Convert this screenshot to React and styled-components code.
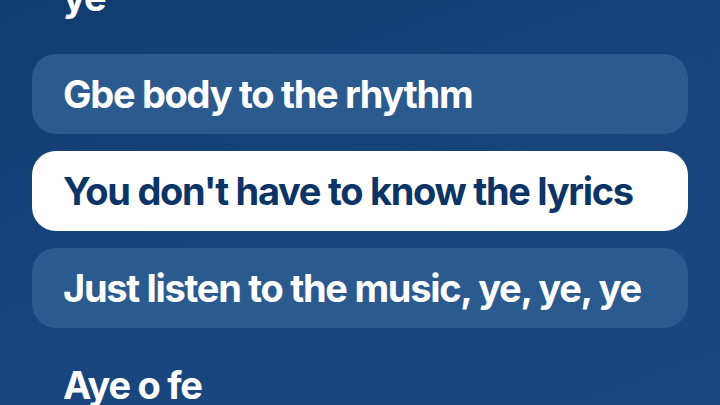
import React from "react";
import styled, { createGlobalStyle } from "styled-components";

const Global = createGlobalStyle`
  html, body {
    margin: 0;
    padding: 0;
    width: 720px;
    height: 405px;
    overflow: hidden;
  }
  body {
    background: linear-gradient(160deg, #113c71 0%, #17457c 55%, #1a4880 100%);
    font-family: Inter, "Noto Sans", sans-serif;
  }
`;

const Viewport = styled.main`
  width: 720px;
  height: 405px;
  overflow: hidden;
`;

/* Lyric list, scrolled so the active line sits near the middle */
const List = styled.ol`
  list-style: none;
  margin: 0;
  padding: 0 32px;
  display: flex;
  flex-direction: column;
  gap: 17px;
  transform: translateY(${(p) => p.$offset}px);
`;

const Line = styled.li`
  height: 80px;
  box-sizing: border-box;
  padding: 0 31px;
  display: flex;
  align-items: center;
  border-radius: 24px;
  background: ${(p) =>
    p.$state === "active" ? "#ffffff" : p.$state === "near" ? "#2b5a8e" : "transparent"};
  color: ${(p) => (p.$state === "active" ? "#0b3567" : "#ffffff")};
  font-size: 38px;
  font-weight: 700;
  letter-spacing: -0.034em;
  white-space: nowrap;
`;

const lyrics = [
  { text: "ye", state: "far" },
  { text: "Gbe body to the rhythm", state: "near" },
  { text: "You don't have to know the lyrics", state: "active" },
  { text: "Just listen to the music, ye, ye, ye", state: "near" },
  { text: "Aye o fe", state: "far" },
];

export default function App() {
  return (
    <>
      <Global />
      <Viewport>
        <List $offset={-43}>
          {lyrics.map((l, i) => (
            <Line key={i} $state={l.state}>
              {l.text}
            </Line>
          ))}
        </List>
      </Viewport>
    </>
  );
}
